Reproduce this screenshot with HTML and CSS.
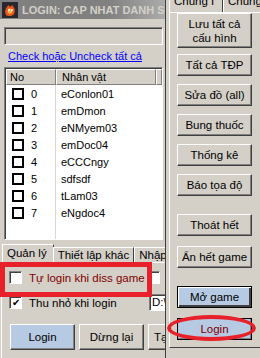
FILE: index.html
```html
<!DOCTYPE html>
<html>
<head>
  <title>Login</title>
  <link rel="stylesheet" href="styles.css">
</head>
<body>
  <div class="screen">
    <div class="left">
      <div class="titlebar">
        <svg class="app-icon" viewBox="0 0 16 16" width="16" height="16">
          <rect width="16" height="16" fill="#2a2630"/>
          <path d="M4 13 C2 9 4 5 7 3 C7 5 9 5 10 3 C12 5 14 8 12 12 C11 14 6 15 4 13 Z" fill="#e8571c"/>
          <path d="M6 11 C5 9 6 7 8 6 C9 8 11 8 10 11 C9 12 7 12 6 11 Z" fill="#f6b24a"/>
          <circle cx="7" cy="8" r="1" fill="#fff"/>
          <circle cx="10" cy="8" r="1" fill="#fff"/>
        </svg>
        <span>LOGIN: CAP NHAT DANH SACH</span>
      </div>
      <div class="addr"></div>
      <a class="checkall" href="#">Check hoặc Uncheck tất cả</a>
      <div class="list">
        <div class="list-head">
          <div class="hcell col-no">No</div>
          <div class="hcell col-name">Nhân vật</div>
          <div class="hcell col-rest"></div>
        </div>
        <div class="list-body">
          <div class="row"><div class="col-no"><span class="box"></span>0</div><div class="col-name">eConlon01</div></div>
          <div class="row"><div class="col-no"><span class="box"></span>1</div><div class="col-name">emDmon</div></div>
          <div class="row"><div class="col-no"><span class="box"></span>2</div><div class="col-name">eNMyem03</div></div>
          <div class="row"><div class="col-no"><span class="box"></span>3</div><div class="col-name">emDoc04</div></div>
          <div class="row"><div class="col-no"><span class="box"></span>4</div><div class="col-name">eCCCngy</div></div>
          <div class="row"><div class="col-no"><span class="box"></span>5</div><div class="col-name">sdfsdf</div></div>
          <div class="row"><div class="col-no"><span class="box"></span>6</div><div class="col-name">tLam03</div></div>
          <div class="row"><div class="col-no"><span class="box"></span>7</div><div class="col-name">eNgdoc4</div></div>
        </div>
      </div>
      <div class="tabs">
        <div class="tab active">Quản lý</div>
        <div class="tab">Thiết lập khác</div>
        <div class="tab">Nhập</div>
      </div>
      <div class="tab-page">
        <div class="opt">
          <span class="cb"></span>
          <span class="opt-text red">Tự login khi diss game</span>
          <span class="cb side"></span>
        </div>
        <div class="opt">
          <span class="cb checked">&#10004;</span>
          <span class="opt-text">Thu nhỏ khi login</span>
          <span class="path">D:\</span>
        </div>
        <div class="actions">
          <button class="btn blue">Login</button>
          <button class="btn">Dừng lại</button>
          <button class="btn">Tạm dừng</button>
        </div>
      </div>
      <div class="mark-rect"></div>
    </div>

    <div class="right">
      <div class="rtabs">
        <div class="rtab active">Chung I</div>
        <div class="rtab">Chung II</div>
      </div>
      <div class="rpage">
        <button class="btn tall">Lưu tất cả<br>cấu hình</button>
        <button class="btn g2">Tất cả TĐP</button>
        <button class="btn g8">Sửa đồ (all)</button>
        <button class="btn g8">Bung thuốc</button>
        <button class="btn g8">Thống kê</button>
        <button class="btn g8">Báo tọa độ</button>
        <button class="btn g18">Thoát hết</button>
        <button class="btn g10">Ẩn hết game</button>
        <button class="btn blue dark g18">Mở game</button>
        <button class="btn blue login g10">Login</button>
      </div>
      <div class="mark-ellipse"></div>
    </div>
  </div>
</body>
</html>
```

FILE: styles.css
```css
body {
  margin: 0;
  background: #d4d0c8;
  font-family: "Liberation Sans", Arial, sans-serif;
  font-size: 11px;
  color: #000;
}
.screen {
  display: flex;
  width: 260px;
  height: 358px;
  overflow: hidden;
}
.left {
  position: relative;
  width: 165px;
  flex: none;
  overflow: hidden;
  border-right: 1px solid #404040;
}
.titlebar {
  height: 19px;
  display: flex;
  align-items: center;
  gap: 4px;
  padding-left: 2px;
  background: linear-gradient(90deg, #808080 65%, #ababab);
  color: #d4d0c8;
  font-weight: bold;
  font-size: 11px;
  white-space: nowrap;
  overflow: hidden;
}
.app-icon {
  flex: none;
}
.addr {
  margin: 8px 2px 0 4px;
  height: 18px;
  box-sizing: border-box;
  border: 1px solid;
  border-color: #808080 #fff #fff #808080;
  box-shadow: inset 1px 1px #404040;
}
.checkall {
  display: block;
  margin: 4px 0 0 8px;
  line-height: 15px;
  color: #0000ff;
}
.list {
  margin: 3px 2px 0 4px;
  height: 173px;
  box-sizing: border-box;
  border: 1px solid;
  border-color: #808080 #fff #fff #808080;
  box-shadow: inset 1px 1px #404040;
  background: #fff;
  padding: 1px 0 0 1px;
  display: flex;
  flex-direction: column;
}
.list-head {
  display: flex;
  height: 16px;
  flex: none;
}
.hcell {
  box-sizing: border-box;
  background: #d4d0c8;
  border: 1px solid;
  border-color: #fff #808080 #808080 #fff;
  padding-left: 3px;
  line-height: 14px;
}
.col-no {
  width: 50px;
  flex: none;
  box-sizing: border-box;
}
.col-name {
  width: 100px;
  flex: none;
  box-sizing: border-box;
  padding-left: 5px;
}
.col-rest {
  flex: 1;
}
.list-body {
  flex: 1;
  background: linear-gradient(90deg, transparent 49px, #d8d8d8 49px, #d8d8d8 50px, transparent 50px);
}
.row {
  display: flex;
  height: 17px;
  align-items: center;
}
.row .col-no {
  display: flex;
  align-items: center;
  padding-left: 6px;
}
.box {
  width: 8px;
  height: 8px;
  border: 2px solid #000;
  background: #fff;
  margin-right: 7px;
}
.tabs {
  display: flex;
  align-items: flex-end;
  height: 18px;
  margin: 4px 0 0 2px;
}
.tab {
  height: 15px;
  box-sizing: border-box;
  padding: 0 4px;
  border: 1px solid;
  border-bottom: none;
  border-color: #fff #404040 transparent #fff;
  line-height: 15px;
  font-size: 11.5px;
  white-space: nowrap;
}
.tab.active {
  height: 18px;
  padding: 0 6px 0 4px;
  line-height: 17px;
  margin-right: -1px;
}
.tab-page {
  margin-left: 1px;
  height: 96px;
  border-left: 1px solid #fff;
  border-top: 1px solid #fff;
  padding: 8px 0 0 7px;
  box-sizing: border-box;
}
.opt {
  display: flex;
  align-items: center;
  height: 13px;
  margin-bottom: 12px;
}
.opt-text {
  flex: 1;
  margin-left: 7px;
  font-size: 11.5px;
  white-space: nowrap;
}
.opt-text.red {
  color: #800000;
}
.cb {
  width: 13px;
  height: 13px;
  box-sizing: border-box;
  background: #fff;
  border: 1px solid;
  border-color: #808080 #fff #fff #808080;
  box-shadow: inset 1px 1px #404040;
  font-size: 10px;
  line-height: 11px;
  text-align: center;
  flex: none;
}
.cb.side {
  margin-right: 5px;
}
.path {
  width: 22px;
  height: 17px;
  box-sizing: border-box;
  border: 1px solid;
  border-color: #808080 #fff #fff #808080;
  box-shadow: inset 1px 1px #404040;
  background: #fff;
  padding: 1px 0 0 2px;
  margin-right: -6px;
  font-size: 11.5px;
}
.actions {
  display: flex;
  gap: 4px;
  margin-left: 1px;
  margin-top: 15px;
}
.actions .btn {
  width: 65px;
  height: 26px;
  flex: none;
}
.btn {
  display: block;
  font-family: inherit;
  font-size: 11.5px;
  background: #d4d0c8;
  color: #000;
  border: 1px solid;
  border-color: #fff #404040 #404040 #fff;
  box-shadow: inset -1px -1px #808080;
  padding: 0;
  text-align: center;
}
.btn.blue {
  background: #b7cae3;
}
.btn.dark {
  border-color: #000;
  box-shadow: inset 1px 1px #fff, inset -2px -2px #404040;
}
.btn.login {
  color: #800000;
  border-color: #000;
}
.right {
  position: relative;
  flex: 1;
  padding-left: 3px;
}
.rtabs {
  display: flex;
  height: 12px;
  align-items: flex-end;
  overflow: hidden;
}
.rtab {
  height: 19px;
  flex: none;
  box-sizing: border-box;
  padding: 0 4px;
  border: 1px solid;
  border-bottom: none;
  border-color: #fff #404040 transparent #fff;
  line-height: 15px;
  font-size: 11.5px;
  white-space: nowrap;
}
.rtab.active {
  width: 54px;
}
.rpage {
  border-left: 1px solid #fff;
  border-top: 1px solid #fff;
  border-bottom: 1px solid #404040;
  height: 336px;
  box-sizing: border-box;
  padding: 0 0 0 7px;
}
.rpage .btn {
  width: 75px;
  height: 22px;
}
.rpage .btn.tall {
  height: 35px;
  line-height: 14px;
}
.g2 { margin-top: 6px; }
.g8 { margin-top: 8px; }
.g10 { margin-top: 10px; }
.g18 { margin-top: 18px; }
.mark-rect {
  position: absolute;
  left: 0;
  top: 262px;
  width: 152px;
  height: 35px;
  box-sizing: border-box;
  border: 5px solid #e8202a;
}
.mark-ellipse {
  position: absolute;
  left: 1px;
  top: 315px;
  width: 89px;
  height: 26px;
  box-sizing: border-box;
  border: 4px solid #e8202a;
  border-radius: 50%;
}
```
